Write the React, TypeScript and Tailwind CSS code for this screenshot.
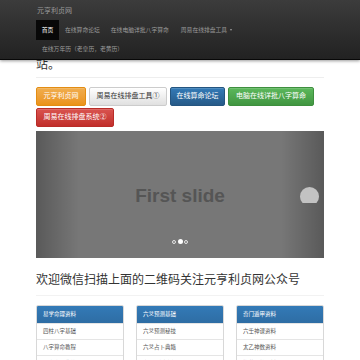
import React from "react";

const cjk = "font-['Liberation_Sans','Noto_Sans_CJK_SC',sans-serif]";

const buttons = [
	{ label: "元亨利贞网", cls: "bg-gradient-to-b from-[#f0ad4e] to-[#eb9316] border-[#e38d13] text-white w-[50px]" },
	{ label: "周易在线排盘工具①", cls: "bg-gradient-to-b from-white to-[#e0e0e0] border-[#ccc] text-[#333] w-[78px]" },
	{ label: "在线算命论坛", cls: "bg-gradient-to-b from-[#337ab7] to-[#265a88] border-[#245580] text-white w-[55px]" },
	{ label: "电脑在线详批八字算命", cls: "bg-gradient-to-b from-[#5cb85c] to-[#419641] border-[#3e8f3e] text-white w-[86px]" },
	{ label: "周易在线排盘系统②", cls: "bg-gradient-to-b from-[#d9534f] to-[#c12e2a] border-[#b92c28] text-white w-[78px]" },
];

const panels = [
	{ title: "易学命理资料", items: ["四柱八字基础", "八字算命教程", "八字命理典籍"] },
	{ title: "六爻预测基础", items: ["六爻预测秘技", "六爻占卜典籍", "六爻预测教程"] },
	{ title: "奇门遁甲资料", items: ["六壬神课资料", "太乙神数资料", "梅花易数资料"] },
];

export default function App() {
	return (
		<div className={`w-[360px] h-[360px] overflow-hidden bg-white ${cjk}`}>
			{/* navbar */}
			<div className="h-[60px] bg-gradient-to-b from-[#3c3c3c] to-[#222] border-b border-[#080808] shadow-[0_1px_3px_rgba(0,0,0,0.4)] relative z-10">
				<div className="mx-[36px]">
					<div className="h-[20px] pt-[6px] pl-[1px] text-[7px] leading-[9px] text-[#9d9d9d]">元亨利贞网</div>
					<div className="flex items-center h-[20px] text-[5.8px] text-[#9d9d9d]">
						<div className="h-full w-[23px] bg-[#080808] text-white flex items-center justify-center">首页</div>
						<div className="ml-[6px]">在线算命论坛</div>
						<div className="ml-[11px]">在线电脑详批八字算命</div>
						<div className="ml-[12px] flex items-center gap-[2px]">
							周易在线排盘工具
							<span className="inline-block border-x-[1.5px] border-t-[2px] border-x-transparent border-t-[#9d9d9d] ml-[1px]" />
						</div>
					</div>
					<div className="h-[19px] pl-[6px] flex items-center text-[5.8px] text-[#9d9d9d]">在线万年历（老皇历，老黄历）</div>
				</div>
			</div>

			<div className="mx-[36px]">
				<div className="h-[17px] overflow-hidden relative">
					<div className="absolute top-[-2px] text-[12px] leading-[14px] text-[#333]">站。</div>
				</div>
				<div className="h-[1px] bg-[#eee]" />

				<div className="flex flex-wrap gap-x-[3px] gap-y-[2px] mt-[9px] w-[290px]">
					{buttons.map((b) => (
						<div
							key={b.label}
							className={`h-[19px] rounded-[2px] border flex items-center justify-center text-[7px] shadow-[inset_0_1px_0_rgba(255,255,255,0.15)] ${b.cls}`}
						>
							{b.label}
						</div>
					))}
				</div>

				{/* carousel */}
				<div className="mt-[4px] h-[127px] bg-[#777] relative flex items-center justify-center overflow-hidden">
					<div className="absolute left-0 top-0 bottom-0 w-[43px] bg-gradient-to-r from-black/25 to-transparent" />
					<div className="absolute right-0 top-0 bottom-0 w-[43px] bg-gradient-to-l from-black/25 to-transparent" />
					<div className="font-['Liberation_Sans',sans-serif] font-bold text-[19px] text-[#555] relative top-[2px]">First slide</div>
					<div className="absolute left-[264px] top-[56px] w-[19px] h-[16px] overflow-hidden">
						<div className="w-[19px] h-[19px] rounded-full bg-[#c2c2c2]" />
					</div>
					<div className="absolute bottom-[14px] left-0 right-0 flex justify-center items-center gap-[1.5px]">
						<div className="w-[4px] h-[4px] rounded-full border border-white/80" />
						<div className="w-[5px] h-[5px] rounded-full bg-white" />
						<div className="w-[4px] h-[4px] rounded-full border border-white/80" />
					</div>
				</div>

				<div className="mt-[15px] text-[12px] leading-[14px] text-[#333]">欢迎微信扫描上面的二维码关注元亨利贞网公众号</div>
				<div className="mt-[8px] h-[1px] bg-[#f2f2f2]" />

				<div className="mt-[9px] grid grid-cols-3 gap-[12px]">
					{panels.map((p) => (
						<div key={p.title} className="border border-[#d8d8d8] rounded-[2px] overflow-hidden">
							<div className="h-[17px] bg-gradient-to-b from-[#337ab7] to-[#2e6da4] text-white text-[5.5px] flex items-center pl-[6px]">
								{p.title}
							</div>
							{p.items.map((it) => (
								<div key={it} className="h-[16px] border-t border-[#e5e5e5] text-[#555] text-[5.5px] flex items-center pl-[6px]">
									{it}
								</div>
							))}
						</div>
					))}
				</div>
			</div>
		</div>
	);
}
